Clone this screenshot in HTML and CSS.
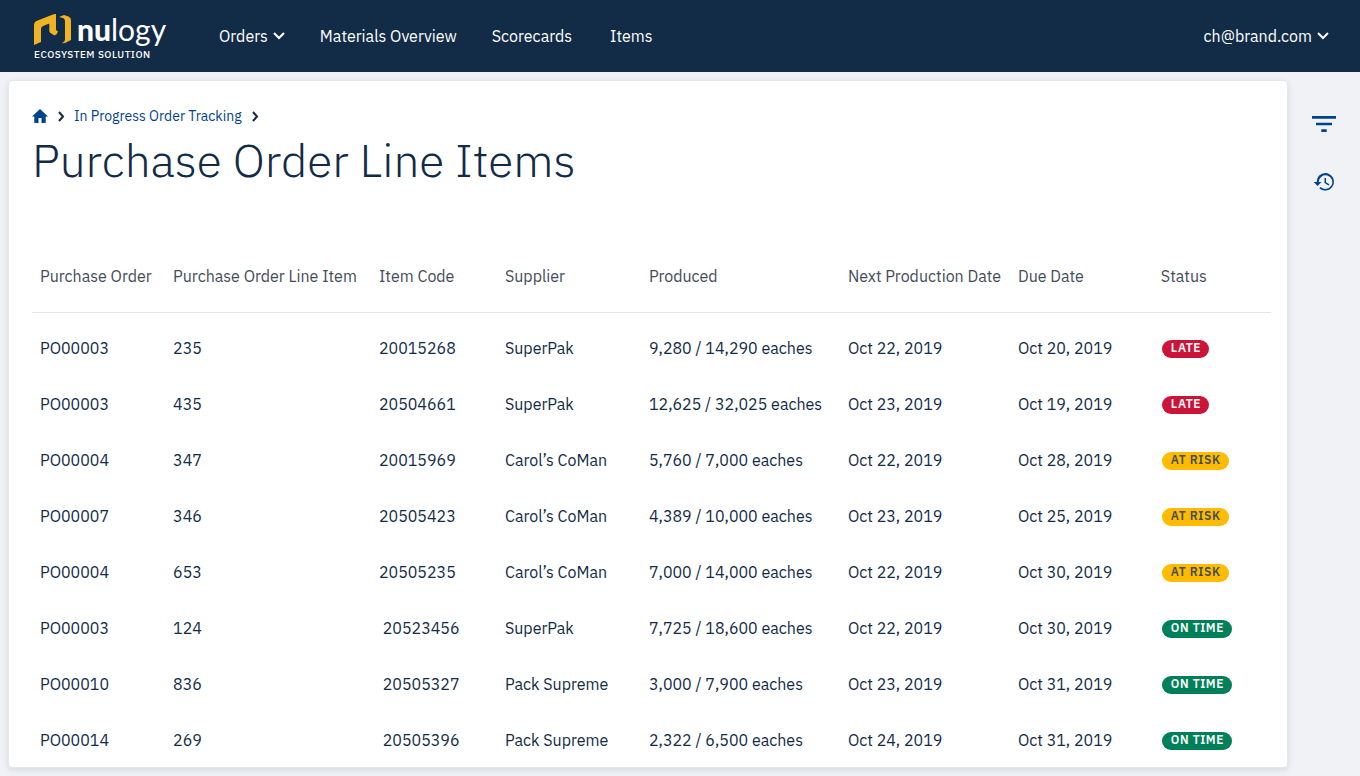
FILE: index.html
```html
<!DOCTYPE html>
<html lang="en">
<head>
<meta charset="utf-8">
<meta name="viewport" content="width=device-width, initial-scale=1">
<title>Purchase Order Line Items</title>
<link rel="stylesheet" href="styles.css">
</head>
<body>
<header class="navbar">
  <a class="brand" href="#">
    <span class="brand-row">
      <svg class="brand-mark" viewBox="0 0 38 32" aria-hidden="true">
        <path d="M0 31V11.500Q0 8 3 6.800L17 1.300Q20 0 22 0V15.500Q22.300 17 24 17.200Q23.500 20.500 20.500 21.500L16.500 19Q15.300 18 15.300 16.500V9.500L9 12Q7 13 7 15V28Z"/>
        <path d="M25 3L30 1L34.500 2.500Q37 3.500 37 6V26L31.500 28.800Q30 29.500 28 29Q31 27.800 31 25V7Q31 4.800 29 4Z"/>
      </svg>
      <span class="brand-name"><b>nu</b>logy</span>
    </span>
    <span class="brand-sub">ECOSYSTEM SOLUTION</span>
  </a>
  <nav class="menu">
    <button class="menu-item" type="button">Orders
      <svg class="chevron" viewBox="0 0 12 8" aria-hidden="true"><path d="M1 1L6 6L11 1"/></svg>
    </button>
    <a class="menu-item" href="#">Materials Overview</a>
    <a class="menu-item menu-last-group" href="#">Scorecards</a>
    <a class="menu-item" href="#">Items</a>
  </nav>
  <button class="menu-item account" type="button">ch@brand.com
    <svg class="chevron" viewBox="0 0 12 8" aria-hidden="true"><path d="M1 1L6 6L11 1"/></svg>
  </button>
</header>
<div class="layout">
  <main class="card">
    <nav class="breadcrumbs" aria-label="Breadcrumbs">
      <a class="home" href="#" aria-label="Home"><svg viewBox="0 0 16 14" aria-hidden="true"><path d="M8 0L0 7.500H2.300V14H6.500V9H9.500V14H13.700V7.500H16Z"/></svg></a>
      <svg class="crumb-arrow" viewBox="0 0 8 12" aria-hidden="true"><path d="M2 2L6 6.500L2 11"/></svg>
      <a href="#">In Progress Order Tracking</a>
      <svg class="crumb-arrow" viewBox="0 0 8 12" aria-hidden="true"><path d="M2 2L6 6.500L2 11"/></svg>
    </nav>
    <h1 class="title">Purchase Order Line Items</h1>
    <table class="items">
      <colgroup>
        <col class="c-order"><col class="c-line"><col class="c-code"><col class="c-supplier"><col class="c-produced"><col class="c-next"><col class="c-due"><col class="c-status">
      </colgroup>
      <thead>
        <tr><th>Purchase Order</th><th>Purchase Order Line Item</th><th>Item Code</th><th>Supplier</th><th>Produced</th><th>Next Production Date</th><th>Due Date</th><th>Status</th></tr>
      </thead>
      <tbody>
        <tr><td>PO00003</td><td>235</td><td>20015268</td><td>SuperPak</td><td>9,280 / 14,290 eaches</td><td>Oct 22, 2019</td><td>Oct 20, 2019</td><td><span class="badge late">LATE</span></td></tr>
        <tr><td>PO00003</td><td>435</td><td>20504661</td><td>SuperPak</td><td>12,625 / 32,025 eaches</td><td>Oct 23, 2019</td><td>Oct 19, 2019</td><td><span class="badge late">LATE</span></td></tr>
        <tr><td>PO00004</td><td>347</td><td>20015969</td><td>Carol’s CoMan</td><td>5,760 / 7,000 eaches</td><td>Oct 22, 2019</td><td>Oct 28, 2019</td><td><span class="badge risk">AT RISK</span></td></tr>
        <tr><td>PO00007</td><td>346</td><td>20505423</td><td>Carol’s CoMan</td><td>4,389 / 10,000 eaches</td><td>Oct 23, 2019</td><td>Oct 25, 2019</td><td><span class="badge risk">AT RISK</span></td></tr>
        <tr><td>PO00004</td><td>653</td><td>20505235</td><td>Carol’s CoMan</td><td>7,000 / 14,000 eaches</td><td>Oct 22, 2019</td><td>Oct 30, 2019</td><td><span class="badge risk">AT RISK</span></td></tr>
        <tr><td>PO00003</td><td>124</td><td>&nbsp;20523456</td><td>SuperPak</td><td>7,725 / 18,600 eaches</td><td>Oct 22, 2019</td><td>Oct 30, 2019</td><td><span class="badge ontime">ON TIME</span></td></tr>
        <tr><td>PO00010</td><td>836</td><td>&nbsp;20505327</td><td>Pack Supreme</td><td>3,000 / 7,900 eaches</td><td>Oct 23, 2019</td><td>Oct 31, 2019</td><td><span class="badge ontime">ON TIME</span></td></tr>
        <tr><td>PO00014</td><td>269</td><td>&nbsp;20505396</td><td>Pack Supreme</td><td>2,322 / 6,500 eaches</td><td>Oct 24, 2019</td><td>Oct 31, 2019</td><td><span class="badge ontime">ON TIME</span></td></tr>
      </tbody>
    </table>
  </main>
  <aside class="tools">
    <button class="tool" type="button" aria-label="Filter"><svg viewBox="0 0 24 24" aria-hidden="true"><path d="M0 4H24V6.700H0ZM4 10.700H20V13.300H4ZM9.300 17.300H14.700V20H9.300Z"/></svg></button>
    <button class="tool" type="button" aria-label="History"><svg viewBox="0 0 24 24" aria-hidden="true"><path d="M13.500 3a8.700 8.700 0 0 0-8.800 9H1.700L5.500 16 9.500 12H6.700a6.800 6.800 0 1 1 2 4.940l-1.400 1.420A8.800 8.800 0 1 0 13.500 3Zm-1 5v5l4.100 2.540.7-1.210-3.300-2.080V8H12.500Z"/></svg></button>
  </aside>
</div>
</body>
</html>
```
FILE: styles.css
```css
* { box-sizing: border-box; }
body {
  margin: 0;
  background: #f0f2f5;
  color: #122b47;
  font: 16px/24px "IBM Plex Sans", Roboto, "Liberation Sans", sans-serif;
}
a { color: inherit; text-decoration: none; }
button { border: 0; padding: 0; background: none; color: inherit; font: inherit; cursor: pointer; }
svg { display: block; }

.navbar {
  display: flex;
  align-items: center;
  height: 72px;
  padding: 0 31px 0 34px;
  background: #122b47;
  color: #fff;
}
.brand { display: flex; flex-direction: column; width: 185px; padding-top: 4px; }
.brand-row { display: flex; gap: 5px; height: 34px; }
.brand-mark { width: 38px; height: 32px; fill: #f0b323; }
.brand-name { font: 400 30px/30px Lato, sans-serif; }
.brand-name b { font-weight: 900; }
.brand-sub { font-size: 10px; line-height: 14px; font-weight: 500; letter-spacing: 0.05em; }
.menu { display: flex; flex: 1; }
.menu-item { display: flex; align-items: center; gap: 5px; margin-right: 35px; white-space: nowrap; }
.menu-last-group { margin-right: 38px; }
.account { margin-right: 0; }
.chevron { width: 12px; height: 8px; fill: none; stroke: #fff; stroke-width: 2; }

.layout { display: flex; padding: 8px 0 8px 8px; }
.card {
  flex: 1;
  min-width: 0;
  padding: 23px 16px 0 23px;
  background: #fff;
  border: 1px solid #e4e8ed;
  border-radius: 4px;
  box-shadow: 0 2px 6px rgba(18, 43, 71, 0.12);
}
.breadcrumbs { display: flex; align-items: center; gap: 9px; color: #00438f; font-size: 14px; }
.home svg { width: 16px; height: 14px; fill: #00438f; }
.crumb-arrow { width: 8px; height: 12px; fill: none; stroke: #122b47; stroke-width: 2; }
.title { margin: 0 0 48px; font-size: 46px; line-height: 64px; font-weight: 300; }

.items { width: 100%; margin-bottom: -1px; border-collapse: collapse; table-layout: fixed; }
.items th, .items td { padding: 0 8px; text-align: left; font-weight: 400; white-space: nowrap; }
.items th { height: 72px; color: #434d59; border-bottom: 1px solid #e4e7eb; }
.items td { height: 56px; }
.items tbody::before { content: ""; display: table-row; height: 8px; }
.c-order { width: 10.74%; }
.c-line { width: 16.62%; }
.c-code { width: 10.17%; }
.c-supplier { width: 11.62%; }
.c-produced { width: 16.06%; }
.c-next { width: 13.72%; }
.c-due { width: 11.54%; }
.c-status { width: 9.53%; }
.badge {
  display: block;
  width: fit-content;
  height: 18px;
  margin: 2px 0 0 1px;
  padding: 0 8px 0 9px;
  border-radius: 9px;
  font-size: 12px;
  line-height: 16px;
  font-weight: 600;
  letter-spacing: 0.05em;
}
.late { background: #cc1439; color: #fff; }
.risk { background: #ffbb00; color: #434d59; }
.ontime { background: #008059; color: #fff; }

.tools { display: flex; flex-direction: column; align-items: center; gap: 34px; width: 72px; padding-top: 32px; }
.tool svg { width: 24px; height: 24px; fill: #00438f; }
```
